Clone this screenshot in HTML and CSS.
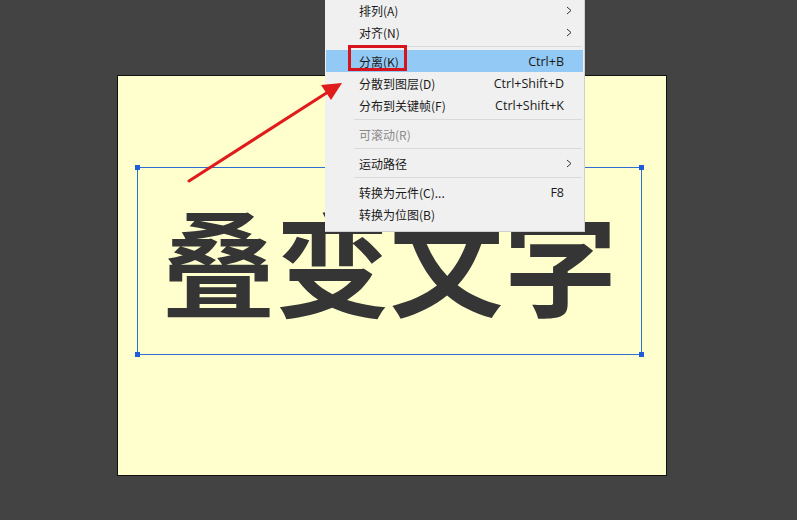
FILE: index.html
```html
<!DOCTYPE html>
<html>
<head>
    <title>叠变文字</title>
    <link rel="stylesheet" href="styles.css">
</head>
<body>
    <div class="workspace">
        <div class="stage">
            <div class="selection">
                <span class="handle tl"></span>
                <span class="handle tr"></span>
                <span class="handle bl"></span>
                <span class="handle br"></span>
                <div class="big-text">叠变文字</div>
            </div>
        </div>
    </div>

    <div class="context-menu">
        <div class="menu-item"><span class="label">排列(A)</span><span class="sub"><svg width="6" height="9" viewBox="0 0 6 9"><path d="M1 1 L5 4.5 L1 8" fill="none" stroke="#333" stroke-width="1"/></svg></span></div>
        <div class="menu-item"><span class="label">对齐(N)</span><span class="sub"><svg width="6" height="9" viewBox="0 0 6 9"><path d="M1 1 L5 4.5 L1 8" fill="none" stroke="#333" stroke-width="1"/></svg></span></div>
        <div class="separator"></div>
        <div class="menu-item active"><span class="label">分离(K)</span><span class="key">Ctrl+B</span><span class="mark"></span></div>
        <div class="menu-item"><span class="label">分散到图层(D)</span><span class="key">Ctrl+Shift+D</span></div>
        <div class="menu-item"><span class="label">分布到关键帧(F)</span><span class="key">Ctrl+Shift+K</span></div>
        <div class="separator"></div>
        <div class="menu-item disabled"><span class="label">可滚动(R)</span></div>
        <div class="separator"></div>
        <div class="menu-item"><span class="label">运动路径</span><span class="sub"><svg width="6" height="9" viewBox="0 0 6 9"><path d="M1 1 L5 4.5 L1 8" fill="none" stroke="#333" stroke-width="1"/></svg></span></div>
        <div class="separator"></div>
        <div class="menu-item"><span class="label">转换为元件(C)...</span><span class="key">F8</span></div>
        <div class="menu-item"><span class="label">转换为位图(B)</span></div>
    </div>

    <!-- red pointer drawn over the menu -->
    <svg class="pointer" width="797" height="520" viewBox="0 0 797 520">
        <line x1="189" y1="181" x2="328" y2="92" stroke="#e01b1b" stroke-width="3" stroke-linecap="round"/>
        <polygon points="342,83 321,85 331,100" fill="#e01b1b"/>
    </svg>
</body>
</html>
```

FILE: styles.css
```css
body {
    margin: 0;
    width: 797px;
    height: 520px;
    overflow: hidden;
    background-color: #434343;
    font-family: "Noto Sans CJK SC", "Noto Sans", sans-serif;
    position: relative;
}
.workspace {
    padding: 75px 0 0 117px;
}
.stage {
    width: 550px;
    height: 401px;
    box-sizing: border-box;
    border: 1px solid #111;
    background-color: #ffffcd;
    padding: 91px 0 0 19px;
}
.selection {
    position: relative;
    width: 505px;
    height: 188px;
    box-sizing: border-box;
    border: 1px solid #2f6ed3;
    display: flex;
    align-items: center;
    justify-content: center;
}
.handle {
    position: absolute;
    width: 5px;
    height: 5px;
    background-color: #1f5ed8;
}
.handle.tl { left: -3px; top: -3px; }
.handle.tr { right: -3px; top: -3px; }
.handle.bl { left: -3px; bottom: -3px; }
.handle.br { right: -3px; bottom: -3px; }
.big-text {
    font-family: "Noto Sans CJK SC", sans-serif;
    font-weight: 700;
    font-size: 114px;
    line-height: 1;
    color: #353535;
    margin: -4px 0 0 0;
    white-space: nowrap;
}
.pointer {
    position: absolute;
    left: 0;
    top: 0;
    pointer-events: none;
}
.context-menu {
    position: absolute;
    left: 325px;
    top: -1px;
    width: 260px;
    box-sizing: border-box;
    background-color: #f0f0f0;
    border-right: 1px solid #cfcfcf;
    border-bottom: 1px solid #cfcfcf;
    padding: 0 1px 6px 1px;
    font-size: 12px;
    color: #1a1a1a;
}
.menu-item {
    position: relative;
    height: 22px;
    display: flex;
    align-items: center;
    padding: 0 19px 0 33px;
}
.menu-item .label {
    flex: 1;
}
.menu-item .key {
    font-family: "Open Sans", "Noto Sans", sans-serif;
    font-size: 12.5px;
}
.menu-item .sub {
    display: flex;
    margin-right: -8px;
}
.menu-item.active {
    background-color: #93c9f5;
}
.menu-item.disabled {
    color: #8a8a8a;
}
.mark {
    position: absolute;
    left: 22px;
    top: -5px;
    width: 53px;
    height: 20px;
    border: 3px solid #d7141c;
}
.separator {
    height: 1px;
    margin: 3px 1px 3px 28px;
    background-color: #d9d9d9;
}
```
